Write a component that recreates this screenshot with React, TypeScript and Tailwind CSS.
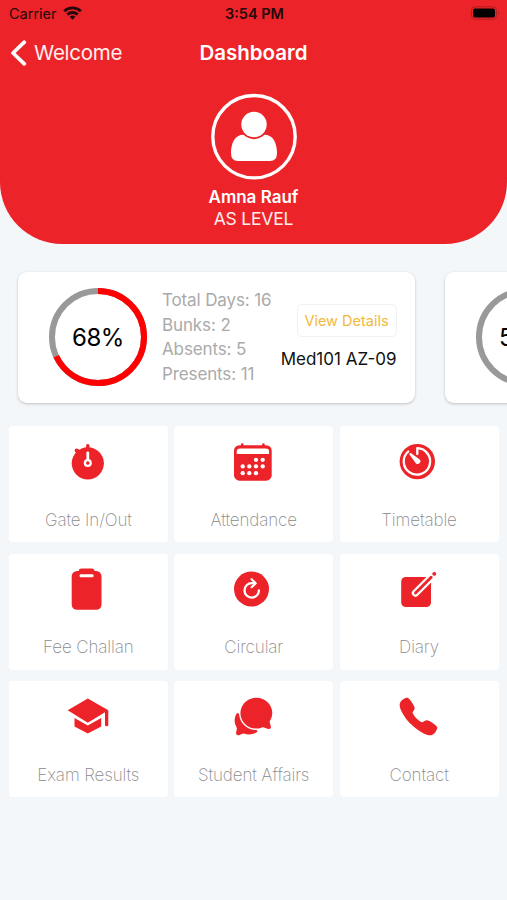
import type { ReactNode } from "react";
import { IoCall, IoChatbubbles } from "react-icons/io5";

const RED = "#ec2429";

function Progress({ percent }: { percent: number }) {
  const r = 46;
  const c = 2 * Math.PI * r;
  return (
    <div className="grid h-[98px] w-[98px] shrink-0 place-items-center">
      <svg viewBox="0 0 98 98" className="col-start-1 row-start-1 h-[98px] w-[98px] -rotate-90" fill="none" strokeWidth="6">
        <circle cx="49" cy="49" r={r} stroke="#999999" />
        <circle cx="49" cy="49" r={r} stroke="#ff0000" strokeDasharray={`${(c * percent) / 100} ${c}`} />
      </svg>
      <span className="col-start-1 row-start-1 pt-[1px] text-[24px] leading-none tracking-[-0.5px] text-black">{percent}%</span>
    </div>
  );
}

type Details = { total: number; bunks: number; absents: number; presents: number; name: string };

function SubjectCard({ percent, details }: { percent: number; details?: Details }) {
  return (
    <article className="flex h-[131px] w-[397px] shrink-0 items-center rounded-[9px] bg-white pr-[18.5px] pl-[31px] shadow-[0_1px_3px_rgba(0,0,0,0.22)]">
      <Progress percent={percent} />
      {details && (
        <>
          <div className="ml-[15px] text-[17px] leading-[24.5px] tracking-[-0.12px] whitespace-nowrap text-[#aaaaaa]">
            <p>Total Days: {details.total}</p>
            <p>Bunks: {details.bunks}</p>
            <p>Absents: {details.absents}</p>
            <p>Presents: {details.presents}</p>
          </div>
          <div className="ml-auto flex flex-col items-end">
            <button className="h-[33px] w-[100px] rounded-[5px] border border-[#f0f1f3] pt-px text-[14.5px] whitespace-nowrap text-[#f2b83c]">View Details</button>
            <p className="mt-[10px] text-[17px] leading-[24px] whitespace-nowrap text-[#111111]">{details.name}</p>
          </div>
        </>
      )}
    </article>
  );
}

function Glyph({ children }: { children: ReactNode }) {
  return (
    <svg viewBox="0 0 48 48" className="h-12 w-12" fill={RED}>
      {children}
    </svg>
  );
}

const stopwatch = (
  <Glyph>
    <circle cx="23.8" cy="25.3" r="16.1" />
    <circle cx="23.8" cy="7.8" r="1.8" />
    <path d="M22.300 8h3v3h-3zM11.400 13.800l2.800-2.800 4 3.500-3.500 3.500z" />
    <circle cx="12.600" cy="12.600" r="2" />
    <path d="M23.800 14.800v7.500" stroke="white" strokeWidth="2.800" strokeLinecap="round" />
    <circle cx="23.800" cy="25" r="2.900" fill={RED} stroke="white" strokeWidth="2.300" />
  </Glyph>
);

const calendarDots = [[27, 21.8], [33.7, 21.8], [13.7, 28.4], [20.3, 28.4], [27, 28.4], [33.7, 28.4], [13.7, 35.2], [20.3, 35.2], [27, 35.2]];
const calendar = (
  <Glyph>
    <rect x="5" y="7.200" width="37.700" height="35.500" rx="5.500" />
    <path d="M13.200 6.500v3M34.400 6.500v3" stroke={RED} strokeWidth="2.600" strokeLinecap="round" />
    <path d="M7.700 16v-2.400q0-3.200 3.200-3.200h26q3.200 0 3.200 3.200V16z" fill="white" />
    {calendarDots.map(([x, y]) => (
      <circle key={`${x}-${y}`} cx={x} cy={y} r="2.150" fill="white" />
    ))}
  </Glyph>
);

const timer = (
  <Glyph>
    <circle cx="22.300" cy="23.600" r="17.700" />
    <path d="M13.200 13.500a13.200 13.200 0 1 0 9.100-3.300v5.800" fill="none" stroke="white" strokeWidth="2.300" strokeLinecap="round" strokeLinejoin="round" />
    <path d="M14.700 15.200q.6-.6 1.400 0l8.300 6.100q2.100 1.900.3 3.800-2 1.900-3.900.1l-6.200-8.400q-.7-.9.1-1.600z" fill="white" />
  </Glyph>
);

const clipboard = (
  <Glyph>
    <rect x="7.700" y="5" width="29.800" height="38.800" rx="5.300" />
    <rect x="14.600" y="2.600" width="16" height="9" rx="3" />
    <rect x="15.600" y="8.200" width="14" height="3" rx="1.200" fill="white" />
  </Glyph>
);

const refresh = (
  <Glyph>
    <circle cx="22.500" cy="23" r="17.500" />
    <path d="M29.900 24.400a7.200 7.200 0 1 1-7.200-7.200h3.300" fill="none" stroke="white" strokeWidth="2.300" strokeLinecap="round" />
    <path d="M22.600 13.200l4.100 4-4.100 4" fill="none" stroke="white" strokeWidth="2.200" strokeLinecap="round" strokeLinejoin="round" />
  </Glyph>
);

const compose = (
  <Glyph>
    <rect x="6.200" y="11" width="29.800" height="30" rx="4.600" />
    <path d="M20.500 27L39 8.500" stroke="white" strokeWidth="7.400" strokeLinecap="round" />
    <path d="M20.500 27L36.200 11.300" stroke={RED} strokeWidth="2.900" strokeLinecap="round" />
    <path d="M39.200 7.800h.1" stroke={RED} strokeWidth="3.800" strokeLinecap="round" />
  </Glyph>
);

const school = (
  <Glyph>
    <path d="M3.700 17.300L23.800 5.500l20.500 11.800L23.800 29.800z" />
    <path d="M10.500 25v8.500L23.800 40.600 37.200 33.500V25L23.800 32.600z" />
    <path d="M41 17.500h3.300V32q0 1.200-1.600 1.200T41 32z" />
  </Glyph>
);

const tiles: { label: string; icon: ReactNode }[] = [
  { label: "Gate In/Out", icon: stopwatch },
  { label: "Attendance", icon: calendar },
  { label: "Timetable", icon: timer },
  { label: "Fee Challan", icon: clipboard },
  { label: "Circular", icon: refresh },
  { label: "Diary", icon: compose },
  { label: "Exam Results", icon: school },
  { label: "Student Affairs", icon: <IoChatbubbles className="mb-px h-[43px] w-[43px]" color={RED} /> },
  { label: "Contact", icon: <IoCall className="mb-px h-[43px] w-[43px]" color={RED} /> },
];

function StatusBar() {
  return (
    <div className="grid h-[27px] grid-cols-3 items-center pr-[7px] pl-[9px] text-[14.500px] text-[#25080a]">
      <div className="flex items-center gap-[6px]">
        <span>Carrier</span>
        <svg viewBox="0 0 19 14" className="mb-px h-[14px] w-[19px]" fill="none" stroke="#25080a" strokeWidth="2.800">
          <path d="M1.200 5.300a12 12 0 0 1 16.600 0M4.300 8.600a7.500 7.500 0 0 1 10.400 0" />
          <path d="M9.500 13.700l-2.900-3q2.900-2.300 5.800 0z" fill="#25080a" stroke="none" />
        </svg>
      </div>
      <span className="text-center font-semibold">3:54 PM</span>
      <svg viewBox="0 0 30 14" className="mb-px h-[14px] w-[30px] justify-self-end">
        <rect x="1.500" y=".8" width="25" height="12.400" rx="3.500" fill="none" stroke="#b01d21" />
        <rect x="3" y="2.500" width="22" height="9" rx="2" fill="black" />
        <path d="M28 5q1.600 2 0 4z" fill="#8f1a1d" />
      </svg>
    </div>
  );
}

export default function App() {
  return (
    <main className="h-[900px] w-[507px] overflow-hidden bg-[#f3f7fa] font-['Inter','Liberation_Sans',sans-serif]">
      <header className="h-[243.500px] rounded-b-[62px] bg-[#ec2429]">
        <StatusBar />
        <nav className="grid h-[51px] grid-cols-[1fr_auto_1fr] items-center px-[10px] text-white">
          <div className="flex items-center gap-[7px]">
            <svg viewBox="0 0 17 26" className="h-[26px] w-[17px]" fill="none" stroke="white" strokeWidth="3.700" strokeLinecap="round" strokeLinejoin="round">
              <path d="M14.300 2.200L3 13l11.300 10.800" />
            </svg>
            <span className="pt-px text-[20.500px] tracking-[-0.250px] text-[#ffeeee]">Welcome</span>
          </div>
          <h1 className="pt-px text-[20.500px] font-semibold">Dashboard</h1>
          <span />
        </nav>
        <section className="flex flex-col items-center pt-[15px] text-white">
          <svg viewBox="0 0 88 88" className="h-[88px] w-[88px]" fill="white">
            <circle cx="44" cy="43.700" r="41.200" fill="none" stroke="white" strokeWidth="3.400" />
            <circle cx="44" cy="31.500" r="12.700" />
            <path d="M33.500 41.800Q44 50.500 54.500 41.800C63 41.800 67 50 67 60q0 8-7 8H28q-7 0-7-8c0-10 4-18.200 12.500-18.200z" />
          </svg>
          <p className="mt-[5px] text-[17px] leading-[22px] font-semibold">Amna Rauf</p>
          <p className="text-[17.500px] leading-[22px] tracking-[-0.200px] text-[#ffeeee]">AS LEVEL</p>
        </section>
      </header>

      <section className="flex h-[182.500px] gap-[30px] overflow-hidden pt-[28px] pl-[18px]">
        <SubjectCard percent={68} details={{ total: 16, bunks: 2, absents: 5, presents: 11, name: "Med101 AZ-09" }} />
        <SubjectCard percent={50} />
      </section>

      <section className="grid grid-cols-3 gap-x-[6.500px] gap-y-[11.500px] pr-[8.500px] pl-[8.900px]">
        {tiles.map(({ label, icon }) => (
          <button key={label} className="flex h-[116px] flex-col items-center rounded-[4px] bg-white pt-[12px]">
            <span className="-ml-px flex h-12 w-12 items-center justify-center">{icon}</span>
            <span className="mt-[21.500px] text-[17px] leading-[24px] font-extralight tracking-[-0.120px] whitespace-nowrap text-[#8c8c8c]">{label}</span>
          </button>
        ))}
      </section>
    </main>
  );
}
